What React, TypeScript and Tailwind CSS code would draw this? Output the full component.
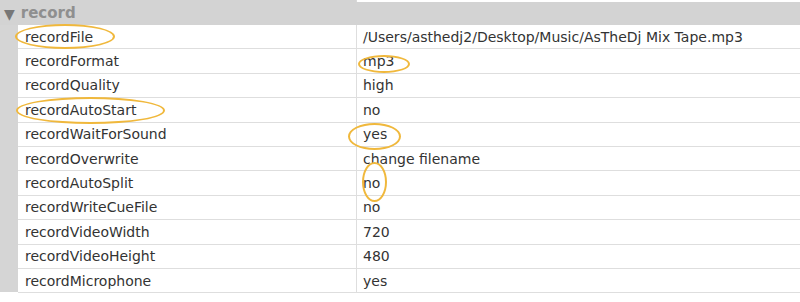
import React from 'react';

const rows: [string, string][] = [
  ['recordFile', '/Users/asthedj2/Desktop/Music/AsTheDj Mix Tape.mp3'],
  ['recordFormat', 'mp3'],
  ['recordQuality', 'high'],
  ['recordAutoStart', 'no'],
  ['recordWaitForSound', 'yes'],
  ['recordOverwrite', 'change filename'],
  ['recordAutoSplit', 'no'],
  ['recordWriteCueFile', 'no'],
  ['recordVideoWidth', '720'],
  ['recordVideoHeight', '480'],
  ['recordMicrophone', 'yes'],
];

// annotation ellipses drawn over the table
const marks = [
  { left: 'left-[15px]', top: 'top-[24px]', w: 'w-[100px]', h: 'h-[25px]' },
  { left: 'left-[358px]', top: 'top-[55px]', w: 'w-[52px]', h: 'h-[18px]' },
  { left: 'left-[16px]', top: 'top-[97px]', w: 'w-[149px]', h: 'h-[27px]' },
  { left: 'left-[348px]', top: 'top-[123px]', w: 'w-[53px]', h: 'h-[27px]' },
  { left: 'left-[362px]', top: 'top-[162px]', w: 'w-[25px]', h: 'h-[40px]' },
];

export default function App() {
  return (
    <div
      className="relative w-[800px] h-[302px] bg-white overflow-hidden text-[#333]"
      style={{ fontFamily: '"DejaVu Sans", Verdana, sans-serif' }}
    >
      <div className="flex h-[2px]">
        <div className="w-[356px] bg-[#d3d3d3]" />
        <div className="flex-1 border-l border-[#d9d9d9] bg-white" />
      </div>
      <div className="flex items-center h-[23px] bg-[#d3d3d3] pl-[4px]">
        <span className="text-[14px] text-[#777] leading-none">▼</span>
        <span className="ml-[6px] text-[15px] font-bold text-[#8f8f8f]">record</span>
      </div>
      <div className="flex">
        <div className="w-[18px] bg-[#d5d5d5] h-[267px]" />
        <div className="flex-1">
          {rows.map(([k, v]) => (
            <div key={k} className="flex h-[24.4px] border-b border-[#dedede] text-[14px] leading-none">
              <div className="w-[338px] flex items-center pl-[7px]">{k}</div>
              <div className="flex-1 flex items-center pl-[6px] border-l border-[#dedede]">{v}</div>
            </div>
          ))}
        </div>
      </div>
      {marks.map((m, i) => (
        <div
          key={i}
          className={`absolute ${m.left} ${m.top} ${m.w} ${m.h} rounded-[50%] border-2 border-[#f0b83c]`}
        />
      ))}
    </div>
  );
}
